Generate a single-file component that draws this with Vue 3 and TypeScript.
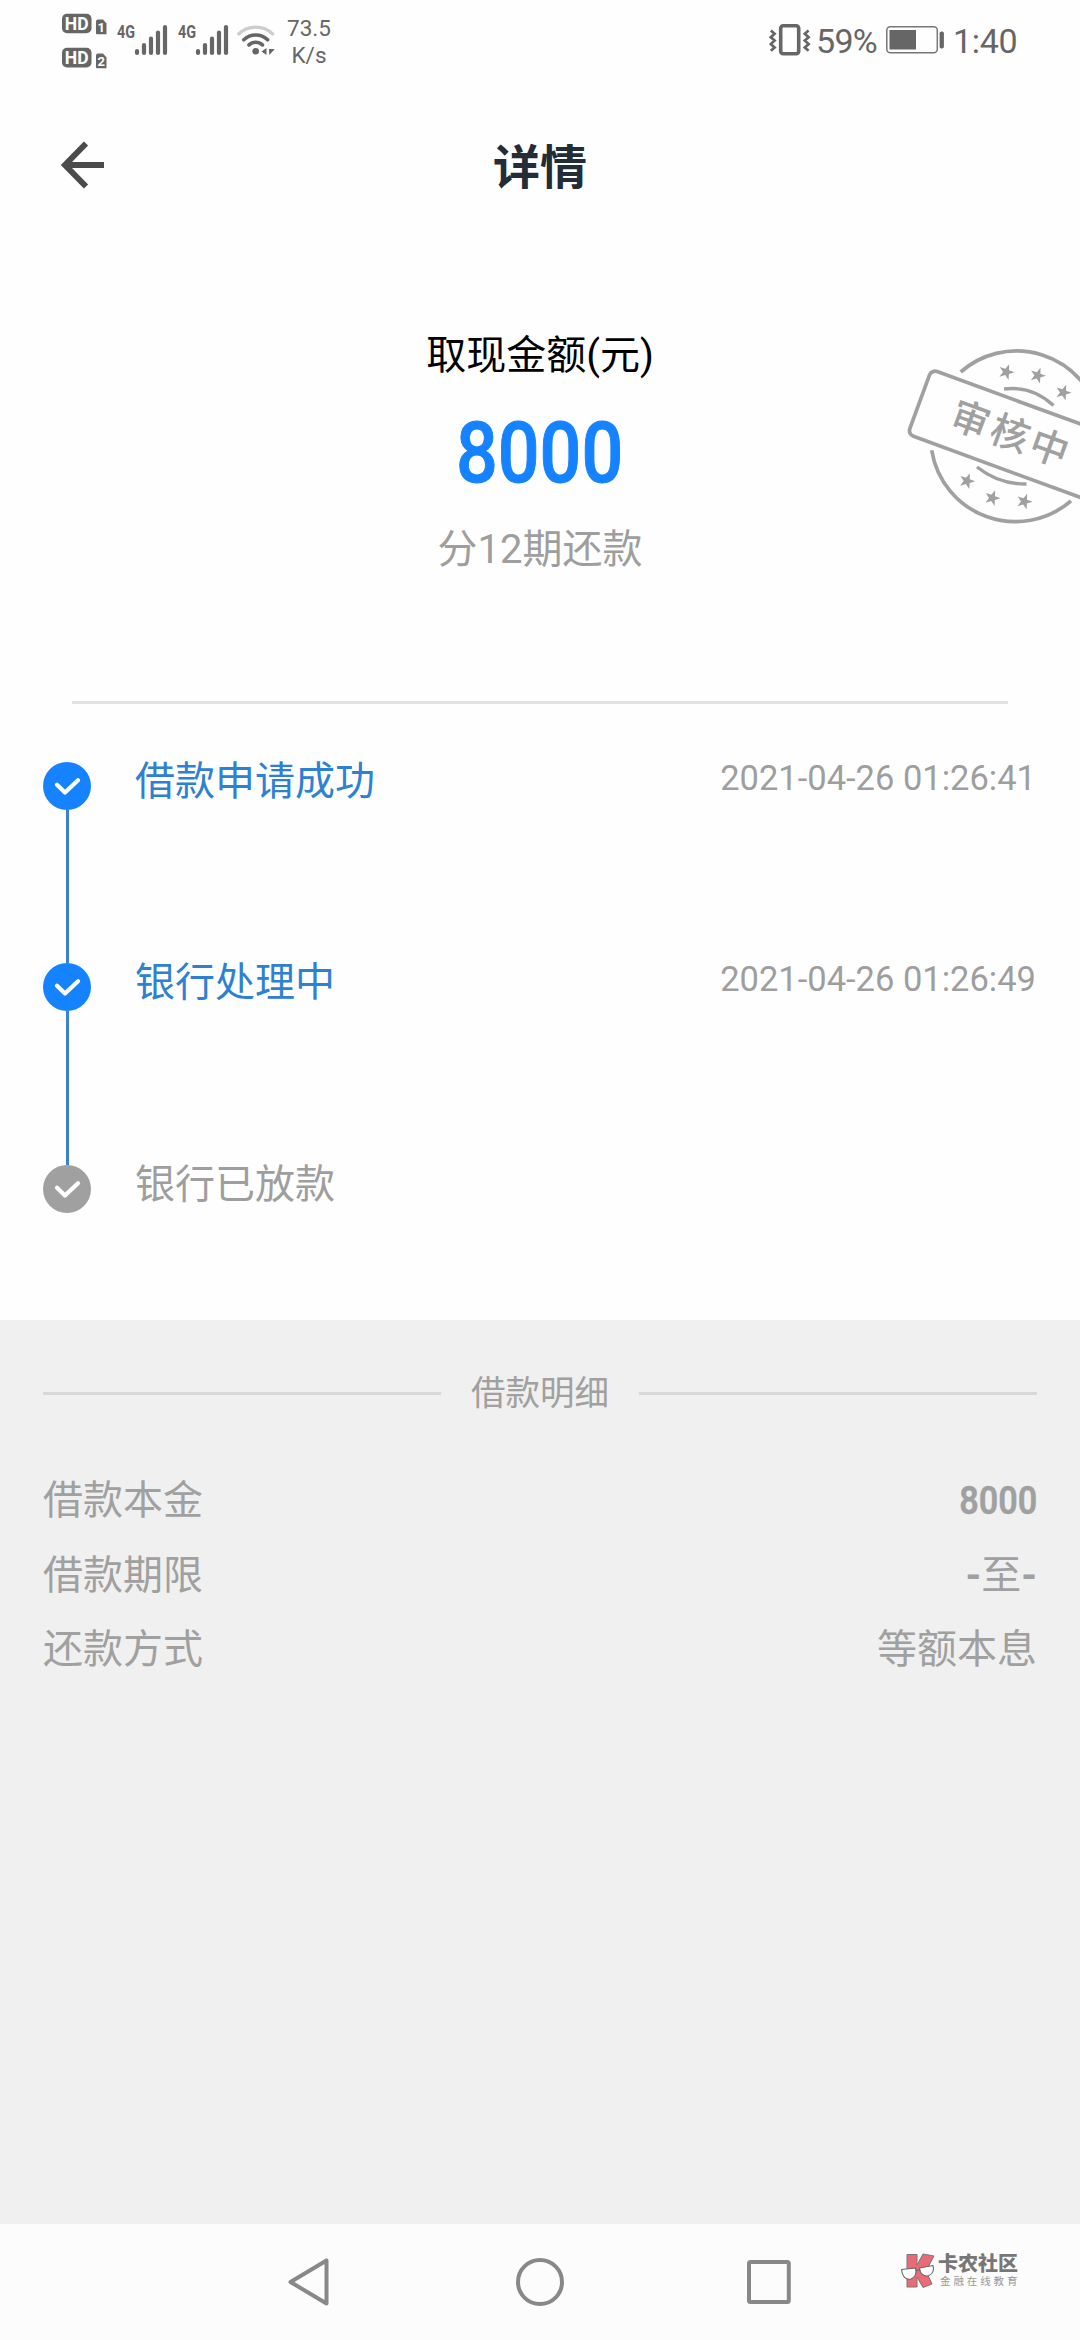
<script setup lang="ts">
interface Step {
  title: string
  time: string
  done: boolean
}

interface DetailRow {
  label: string
  value: string[]
  kind: 'number' | 'range' | 'text'
}

const steps: Step[] = [
  { title: '借款申请成功', time: '2021-04-26 01:26:41', done: true },
  { title: '银行处理中', time: '2021-04-26 01:26:49', done: true },
  { title: '银行已放款', time: '', done: false },
]

const rows: DetailRow[] = [
  { label: '借款本金', value: ['8000'], kind: 'number' },
  { label: '借款期限', value: ['-', '至', '-'], kind: 'range' },
  { label: '还款方式', value: ['等额本息'], kind: 'text' },
]

const signalBars = [
  { x: 3, top: 27 },
  { x: 10, top: 21 },
  { x: 17, top: 14.7 },
  { x: 24, top: 8.5 },
  { x: 31, top: 3 },
]

const stampStars: [number, number][] = [
  [1006.3, 372],
  [1037.7, 375.5],
  [1063.3, 392.5],
  [967, 481],
  [992.3, 498],
  [1024.3, 501.5],
]

// Five-pointed star centred on the origin
const starPoints = Array.from({ length: 10 }, (_, i) => {
  const r = i % 2 === 0 ? 8.3 : 3.3
  const a = (Math.PI / 5) * i - Math.PI / 2
  return `${(r * Math.cos(a)).toFixed(2)},${(r * Math.sin(a)).toFixed(2)}`
}).join(' ')
</script>

<template>
  <div class="screen">
    <div class="status">
      <svg class="hd" width="46" height="58" viewBox="0 0 46 58">
        <g fill="#666">
          <rect x="0" y="1.7" width="29.5" height="19.6" rx="5" />
          <path d="M34 9.5q0-2 2-2h5l3.5 4v10.3q0 .5-.5.5h-9q-1 0-1-1z" />
          <rect x="0" y="35.7" width="29.5" height="19.8" rx="5" />
          <path d="M34 43.500q0-2 2-2h5l3.500 4v10.300q0 .5-.5.5h-9q-1 0-1-1z" />
        </g>
        <g class="hd-text" fill="#fff">
          <text x="14.700" y="17.600" font-size="17.500" text-anchor="middle">HD</text>
          <text x="39.300" y="20" font-size="13" text-anchor="middle">1</text>
          <text x="14.700" y="51.700" font-size="17.500" text-anchor="middle">HD</text>
          <text x="39.300" y="54" font-size="13" text-anchor="middle">2</text>
        </g>
      </svg>
      <div v-for="n in 2" :key="n" class="cell">
        <span class="cell-type">4G</span>
        <svg class="bars" width="34" height="34" viewBox="0 0 34 34">
          <line
            v-for="b in signalBars"
            :key="b.x"
            :x1="b.x"
            :x2="b.x"
            :y1="b.top + 2"
            y2="31"
            stroke="#666"
            stroke-width="4.200"
            stroke-linecap="round"
          />
        </svg>
      </div>
      <svg class="wifi" width="38" height="32" viewBox="0 0 38 32">
        <g fill="none" stroke-linecap="round" stroke-width="3.300">
          <path d="M1.800 9.900A24.300 24.300 0 0 1 35.600 9.900" stroke="#ccc" />
          <path d="M6.800 15.800A17.200 17.200 0 0 1 30.600 15.800" stroke="#666" stroke-width="3.600" />
          <path d="M12 20.900A9.600 9.600 0 0 1 25.400 20.900" stroke="#666" stroke-width="3.600" />
        </g>
        <circle cx="18.700" cy="27.300" r="3.300" fill="#666" />
        <path d="M24.500 27.500L29.500 24V31ZM32 25H37.800L32.300 31Z" fill="#666" />
      </svg>
      <div class="speed"><span>73.5</span><span>K/s</span></div>
      <svg class="vibrate" width="42" height="34" viewBox="0 0 42 34">
        <g fill="none" stroke="#666">
          <rect x="11.700" y="3.800" width="18" height="28" rx="2.500" stroke-width="3.600" />
          <path d="M1.800 8.500l3.800 3.300-3.800 3.500 3.800 3.300-3.800 3.500 3.800 3.300-3.800 3.300M39.600 8.500l-3.800 3.300 3.800 3.500-3.800 3.300 3.800 3.500-3.800 3.300 3.800 3.300" stroke-width="2.700" />
        </g>
      </svg>
      <span class="percent">59%</span>
      <svg class="battery" width="58" height="28" viewBox="0 0 58 28">
        <rect x=".8" y=".8" width="50.500" height="26" rx="3.500" fill="none" stroke="#777" stroke-width="1.500" />
        <rect x="3.500" y="4" width="26.500" height="19.500" fill="#666" />
        <rect x="53.600" y="5.500" width="4.300" height="17" rx="1.800" fill="#666" />
      </svg>
      <span class="clock">1:40</span>
    </div>

    <header class="nav-top">
      <svg class="back" width="46" height="50" viewBox="0 0 46 50">
        <path d="M26 3.500L5 25L26 46.500M5 25H44" fill="none" stroke="#4b4b4b" stroke-width="6" />
      </svg>
      <h1>详情</h1>
    </header>

    <section class="summary">
      <p class="caption">取现金额(元)</p>
      <p class="amount"><span class="din">8000</span></p>
      <p class="period">分12期还款</p>
      <svg class="stamp" width="190" height="210" viewBox="890 330 190 210">
        <g fill="none" stroke="#a0a0a0" stroke-width="3.700">
          <path d="M960.700 372A84.700 84.700 0 0 1 1099 416" />
          <path d="M931.700 450.200A84.700 84.700 0 0 0 1071 500.800" />
          <rect x="0" y="0" width="217" height="69" rx="6" transform="translate(931.500 369.500) rotate(20.100)" />
        </g>
        <g fill="none" stroke="#a0a0a0" stroke-width="3.400">
          <path d="M1004 389Q1032 385.500 1053.500 405.500" />
          <path d="M977 467Q999 484.500 1026.500 484" />
        </g>
        <g fill="#a0a0a0">
          <polygon
            v-for="(s, i) in stampStars"
            :key="i"
            :points="starPoints"
            :transform="`translate(${s[0]} ${s[1]}) rotate(20)`"
          />
          <text class="stamp-text" transform="translate(1011.500 434.500) rotate(20)" y="13.500" text-anchor="middle">审核中</text>
        </g>
      </svg>
    </section>

    <hr class="divider" />

    <ol class="timeline">
      <li v-for="s in steps" :key="s.title" class="step" :class="{ done: s.done }">
        <div class="track">
          <svg class="dot" width="48" height="48" viewBox="0 0 48 48">
            <circle cx="24" cy="24" r="24" />
            <path d="M14 22.800L22 30.600L35 18.200" fill="none" stroke="#fff" stroke-width="4.200" stroke-linecap="round" stroke-linejoin="round" />
          </svg>
          <div v-if="s.done" class="line" />
        </div>
        <span class="title">{{ s.title }}</span>
        <time>{{ s.time }}</time>
      </li>
    </ol>

    <section class="details">
      <h2>借款明细</h2>
      <dl>
        <div v-for="r in rows" :key="r.label" class="row">
          <dt>{{ r.label }}</dt>
          <dd :class="r.kind"><span v-for="(part, i) in r.value" :key="i" :class="{ din: r.kind === 'number', dash: part === '-' }">{{ part }}</span></dd>
        </div>
      </dl>
    </section>

    <footer class="nav-bottom">
      <svg width="44" height="50" viewBox="0 0 44 50">
        <path d="M39.500 3.500V46.500L3.500 25Z" />
      </svg>
      <svg width="50" height="50" viewBox="0 0 50 50">
        <circle cx="25" cy="25" r="22" />
      </svg>
      <svg width="46" height="50" viewBox="0 0 46 50">
        <rect x="3" y="5" width="39.800" height="40" rx="1.500" />
      </svg>
      <div class="brand">
        <svg class="brand-mark" width="36" height="36" viewBox="0 0 36 36">
          <path d="M7 1.500H17V12L23 1L34 3L26 18L32 31L23 34.500L17 24V34H7Z" fill="#ea6b75" stroke="#777" stroke-width="1" />
          <path d="M1.500 16.500L15.500 15Q17.500 23 11 26Q3 27.500 1.500 16.500ZM19.500 15L33 12.500Q35 20 28.500 22.800Q20.500 24 19.500 15ZM15.500 17.500L19.500 17" fill="#fff" stroke="#666" stroke-width="1.100" />
        </svg>
        <div class="brand-text">
          <strong>卡农社区</strong>
          <small>金融在线教育</small>
        </div>
      </div>
    </footer>
  </div>
</template>

<style>
body {
  background: #fff;
}
</style>

<style scoped>
.screen {
  width: 1080px;
  height: 2340px;
  display: flex;
  flex-direction: column;
  overflow: hidden;
  background: #fefefe;
  font-family: Roboto, 'Noto Sans CJK SC', sans-serif;
}

svg {
  display: block;
  flex: none;
}

h1,
h2,
p,
ol,
dl,
dd {
  margin: 0;
  padding: 0;
  font-weight: 400;
}

.status {
  height: 80px;
  flex: none;
  display: flex;
  align-items: flex-start;
  padding-left: 62px;
  color: #666;
}

.hd {
  margin-top: 12px;
}

.hd-text {
  font-family: Roboto, sans-serif;
  font-weight: 700;
}

.cell {
  width: 61px;
  display: flex;
  padding-top: 22px;
}

.cell:first-of-type {
  margin-left: 9px;
}

.cell-type {
  width: 17px;
  font-size: 18px;
  line-height: 20px;
  font-weight: 700;
  transform: scaleX(0.8);
  transform-origin: left;
}

.bars {
  flex: none;
}

.wifi {
  margin: 24px 0 0 -2px;
}

.speed {
  width: 50px;
  margin: 15px 0 0 9px;
  display: flex;
  flex-direction: column;
  text-align: center;
  font-size: 22.500px;
  line-height: 27px;
}

.vibrate {
  margin: 22px 0 0 435px;
}

.percent,
.clock {
  font-size: 34px;
  line-height: 40px;
  margin-top: 21px;
}

.percent {
  width: 63px;
  margin-left: 5px;
  letter-spacing: -0.7px;
}

.battery {
  margin: 26px 0 0 7px;
}

.clock {
  margin-left: 9px;
  letter-spacing: -0.3px;
}

.nav-top {
  height: 170px;
  flex: none;
  display: grid;
  grid-template-columns: 120px 1fr 120px;
  align-items: center;
}

.back {
  margin-left: 60px;
}

h1 {
  padding-top: 5px;
  text-align: center;
  font-size: 47px;
  line-height: 60px;
  font-weight: 700;
  color: #222d38;
}

.summary {
  position: relative;
  height: 451px;
  flex: none;
  box-sizing: border-box;
  padding-top: 76px;
  text-align: center;
}

.caption {
  font-size: 40px;
  line-height: 60px;
  color: #000;
}

.amount {
  height: 134px;
  line-height: 134px;
  font-size: 85px;
  color: #1583ff;
}

.din {
  display: inline-block;
  font-family: Roboto, sans-serif;
  font-weight: 500;
  -webkit-text-stroke: 0.012em currentColor;
  transform: scaleX(0.865);
}

.period {
  font-size: 40px;
  line-height: 60px;
  color: #9e9e9e;
}

/* Sits over the right edge of the summary */
.stamp {
  position: absolute;
  right: 0;
  top: 80px;
}

.stamp-text {
  font-family: 'Noto Sans CJK SC', sans-serif;
  font-size: 38.500px;
  font-weight: 500;
  letter-spacing: 3.500px;
}

.divider {
  width: 936px;
  height: 3px;
  flex: none;
  margin: 0 auto;
  border: 0;
  background: #e1e1e1;
}

.timeline {
  height: 616px;
  flex: none;
  box-sizing: border-box;
  padding: 58px 44px 0 43px;
  list-style: none;
}

.step {
  height: 201.300px;
  display: flex;
  color: #9e9e9e;
}

.track {
  width: 48px;
  display: flex;
  flex-direction: column;
  align-items: center;
}

.dot {
  fill: #a0a0a0;
}

.done .dot {
  fill: #1583ff;
}

.line {
  width: 3px;
  flex: 1;
  background: #3a82ca;
}

.title {
  flex: 1;
  margin-left: 44px;
  font-size: 40px;
  line-height: 40px;
}

.done .title {
  color: #2e80d3;
}

time {
  font-size: 34.500px;
  line-height: 32px;
}

.details {
  flex: 1;
  padding: 46px 43px 0;
  background: #f0f0f0;
  color: #a0a0a0;
}

h2 {
  display: flex;
  align-items: center;
  gap: 30px;
  height: 55px;
  font-size: 34.500px;
  line-height: 55px;
}

h2::before,
h2::after {
  content: '';
  flex: 1;
  height: 3px;
  background: #d8d8d8;
}

dl {
  padding-top: 43px;
}

.row {
  height: 74.600px;
  display: flex;
  justify-content: space-between;
  font-size: 40px;
  line-height: 74px;
}

.number .din {
  font-size: 39.500px;
  font-weight: 600;
  transform-origin: right;
}

.dash {
  font-weight: 700;
}

.nav-bottom {
  height: 116px;
  flex: none;
  display: flex;
  align-items: center;
  padding-left: 287px;
  background: #fcfcfc;
  fill: none;
  stroke: #888;
  stroke-width: 4;
  stroke-linejoin: round;
}

.nav-bottom > svg + svg {
  margin-left: 184px;
}

.nav-bottom > svg:nth-of-type(3) {
  margin-left: 181px;
}

.brand {
  display: flex;
  align-items: center;
  margin: -22px 0 0 108px;
}

.brand-text {
  display: flex;
  flex-direction: column;
  margin-left: 2px;
  color: #777;
  white-space: nowrap;
}

.brand strong {
  font-size: 20px;
  line-height: 21px;
  font-weight: 900;
}

.brand small {
  margin-left: 2px;
  font-size: 10.500px;
  line-height: 14px;
  letter-spacing: 2.900px;
  color: #999;
}
</style>
